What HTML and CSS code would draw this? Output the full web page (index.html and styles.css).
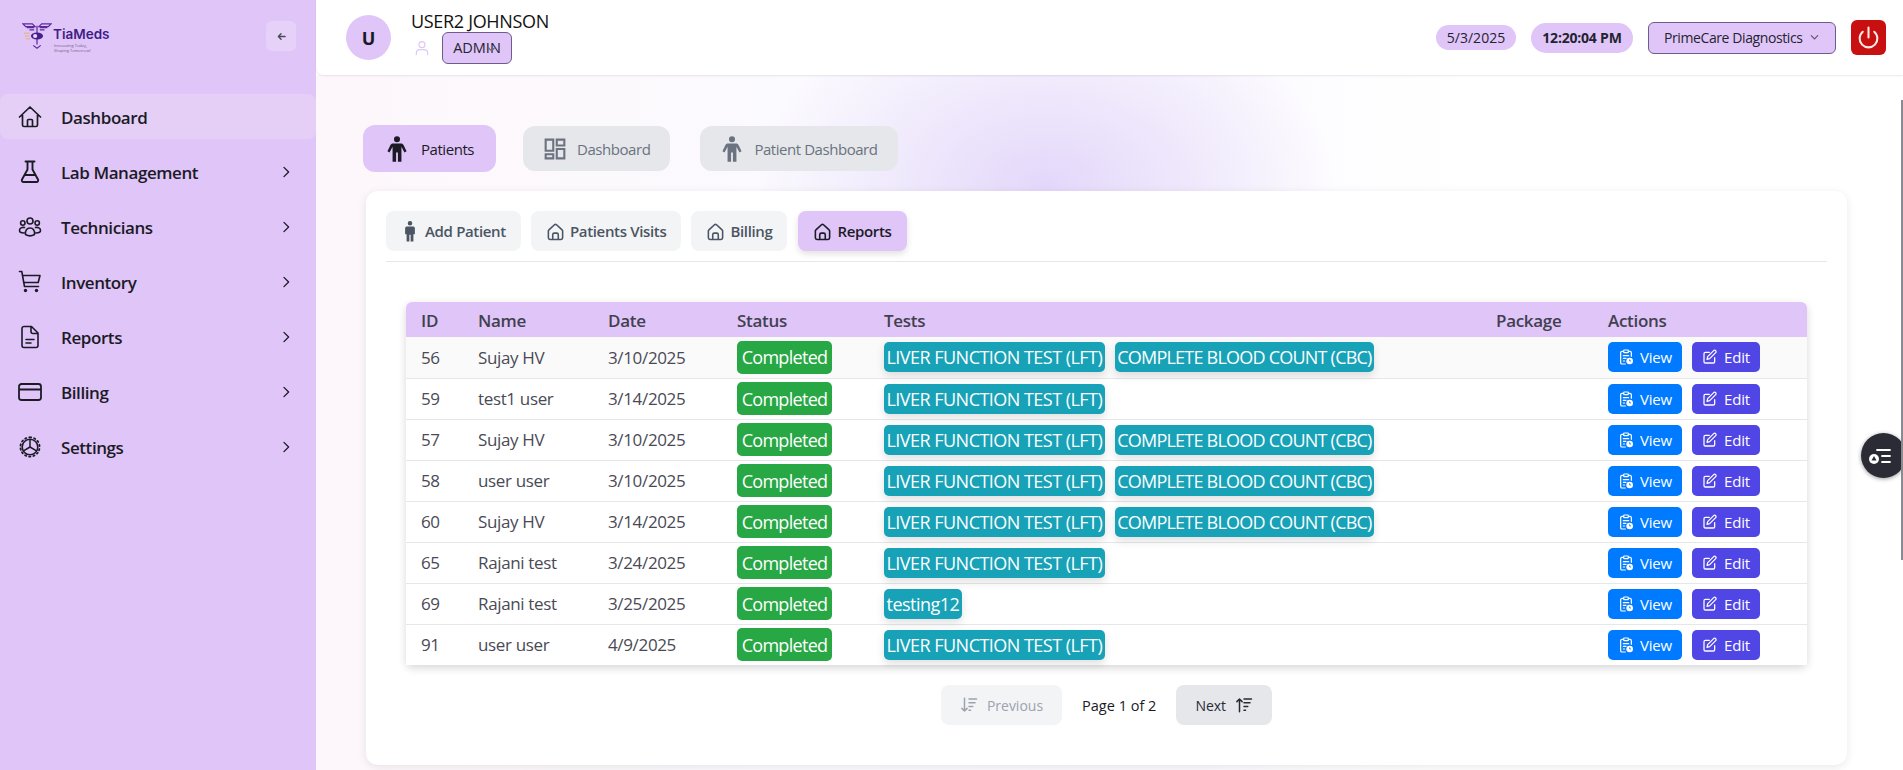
FILE: index.html
```html
<!DOCTYPE html>
<html lang="en">
<head>
<meta charset="utf-8">
<title>TiaMeds</title>
<link rel="stylesheet" href="styles.css">
</head>
<body>
<svg class="sprite" aria-hidden="true">
  <symbol id="i-home" viewBox="0 0 24 24"><path fill="none" stroke="currentColor" stroke-width="1.700" stroke-linecap="round" stroke-linejoin="round" d="M1.500 12 12 2l10.500 10M4.500 10V20a1.500 1.500 0 0 0 1.500 1.500h12a1.500 1.500 0 0 0 1.500-1.500V10M9.500 21.500v-6a1 1 0 0 1 1-1h3a1 1 0 0 1 1 1v6"/></symbol>
  <symbol id="i-house" viewBox="0 0 24 24"><path fill="none" stroke="currentColor" stroke-width="2" stroke-linecap="round" stroke-linejoin="round" d="M3 11.500a2 2 0 0 1 .7-1.500l7-6.500a2 2 0 0 1 2.600 0l7 6.500a2 2 0 0 1 .7 1.500V20a2 2 0 0 1-2 2H5a2 2 0 0 1-2-2ZM8.500 22v-6a2 2 0 0 1 2-2h3a2 2 0 0 1 2 2v6"/></symbol>
  <symbol id="i-person" viewBox="0 0 24 24"><path fill="currentColor" d="M12 1a2.600 2.600 0 1 1 0 5.200a2.600 2.600 0 0 1 0-5.200ZM8.500 7.200h7c1 0 1.700.6 2.100 1.400L20.200 14l-1.800.9L15.800 10v13h-3v-8h-1.600v8h-3V10l-2.600 4.900L3.800 14l2.600-5.400c.4-.8 1.100-1.400 2.100-1.400Z"/></symbol>
  <symbol id="i-slim" viewBox="0 0 24 24"><path fill="currentColor" d="M12 1a2.500 2.500 0 1 1 0 5a2.500 2.500 0 0 1 0-5ZM8.500 7h7A1.800 1.800 0 0 1 17.300 8.800V15.500h-1.600V23.500h-3V16h-1.400v7.500h-3v-8H6.700V8.800A1.800 1.800 0 0 1 8.500 7Z"/></symbol>
  <symbol id="i-grid" viewBox="0 0 24 24"><path fill="none" stroke="currentColor" stroke-width="1.800" d="M4 4h6.500v9.500H4zM13.500 4H20v5h-6.500zM13.500 12H20v8h-6.500zM4 16.500h6.500V20H4z"/></symbol>
  <symbol id="i-flask" viewBox="0 0 24 24"><path fill="none" stroke="currentColor" stroke-width="1.900" stroke-linecap="round" stroke-linejoin="round" d="M7.500 1.500h9M9.500 1.500v8L4 19.500A1.700 1.700 0 0 0 5.500 22h13a1.700 1.700 0 0 0 1.500-2.500L14.500 9.500v-8M7 15h10"/></symbol>
  <symbol id="i-users" viewBox="0 0 24 24"><g fill="none" stroke="currentColor" stroke-width="1.600" stroke-linecap="round" stroke-linejoin="round"><circle cx="12" cy="6" r="3"/><circle cx="4.800" cy="8" r="2.200"/><circle cx="19.200" cy="8" r="2.200"/><path d="M7.500 19.500c-.6-4 1.500-6.500 4.500-6.500s5.100 2.500 4.500 6.500c-2.500 1.500-6.500 1.500-9 0ZM6.500 12.500c-2.500-.5-5 .5-5 3 0 1.500 2 2.500 4.500 2.500M17.500 12.500c2.500-.5 5 .5 5 3 0 1.500-2 2.500-4.500 2.500"/></g></symbol>
  <symbol id="i-cart" viewBox="0 0 24 24"><g fill="none" stroke="currentColor" stroke-width="1.600" stroke-linecap="round" stroke-linejoin="round"><path d="M1.500 1.500h2.300l2.700 15h14M5 5.500h17l-1.800 7H6.200"/></g><circle cx="7.500" cy="20.500" r="1.700" fill="currentColor"/><circle cx="18.500" cy="20.500" r="1.700" fill="currentColor"/></symbol>
  <symbol id="i-doc" viewBox="0 0 24 24"><path fill="none" stroke="currentColor" stroke-width="1.600" stroke-linecap="round" stroke-linejoin="round" d="M6 1.500h7.500L20 8v12.500a2 2 0 0 1-2 2H6a2 2 0 0 1-2-2v-17a2 2 0 0 1 2-2ZM13 1.500V6.500a2 2 0 0 0 2 2h5M8 14.500h8M8 18h5"/></symbol>
  <symbol id="i-card" viewBox="0 0 24 24"><path fill="none" stroke="currentColor" stroke-width="1.800" stroke-linecap="round" stroke-linejoin="round" d="M3.500 4h17A2.500 2.500 0 0 1 23 6.500v11a2.500 2.500 0 0 1-2.500 2.500h-17A2.500 2.500 0 0 1 1 17.500v-11A2.500 2.500 0 0 1 3.500 4ZM1 9.500h22"/></symbol>
  <symbol id="i-gear" viewBox="0 0 24 24"><g fill="none" stroke="currentColor" stroke-linecap="round" stroke-linejoin="round"><circle cx="12" cy="12" r="7.800" stroke-width="1.600"/><path stroke-width="1.500" d="M12 12V4.500M12 12l6.500 3.800M12 12l-6.500 3.800"/><path stroke-width="1.800" stroke-dasharray="1.300 2.900" d="M12 2.400a9.600 9.600 0 1 1-.01 0"/></g></symbol>
  <symbol id="i-chev" viewBox="0 0 24 24"><path fill="none" stroke="currentColor" stroke-width="2.200" stroke-linecap="round" stroke-linejoin="round" d="m8.500 4 8 8-8 8"/></symbol>
  <symbol id="i-clip" viewBox="0 0 24 24"><g fill="none" stroke="currentColor" stroke-width="1.800" stroke-linecap="round" stroke-linejoin="round"><path d="M8.500 3.500H6A2 2 0 0 0 4 5.500v15a2 2 0 0 0 2 2h5M15.500 3.500H18a2 2 0 0 1 2 2V11"/><rect x="8.500" y="1.500" width="7" height="4" rx="1"/><path d="M8 10h8M8 14h4M8 18h2"/></g><circle cx="17.500" cy="18" r="5" fill="currentColor"/><path fill="none" stroke="#007bff" stroke-width="1.300" d="M17.500 15.500V18h2"/></symbol>
  <symbol id="i-edit" viewBox="0 0 24 24"><path fill="none" stroke="currentColor" stroke-width="1.900" stroke-linecap="round" stroke-linejoin="round" d="M11 5H5a2 2 0 0 0-2 2v12a2 2 0 0 0 2 2h12a2 2 0 0 0 2-2v-6M17.500 2.500a2.100 2.100 0 0 1 3 3L11.500 14.500l-4 1 1-4 9-9Z"/></symbol>
  <symbol id="i-sortd" viewBox="0 0 24 24"><path fill="none" stroke="currentColor" stroke-width="2" stroke-linecap="round" stroke-linejoin="round" d="M6 3v17M2.500 16.500 6 20l3.500-3.500M12 4h10M12 9h8M12 14h5M12 19h2"/></symbol>
  <symbol id="i-sortu" viewBox="0 0 24 24"><path fill="none" stroke="currentColor" stroke-width="2" stroke-linecap="round" stroke-linejoin="round" d="M6 21V4M2.500 7.500 6 4l3.500 3.500M12 4h10M12 9h8M12 14h5M12 19h2"/></symbol>
</svg>

<div class="app">
  <aside class="sidebar">
    <div class="brand">
      <div class="logo">
        <svg class="logo-mark" viewBox="0 0 32 28"><g fill="none" stroke="#5b2a9d" stroke-width="1.300"><path d="M1 1h10l3 3H4zM31 1H21l-3 3h10zM5 5h8M27 5h-8M8 7.500h5M24 7.500h-5"/><path d="M16 3v20M12 24l4 3 4-3"/></g><ellipse cx="16" cy="14" rx="6.500" ry="3.800" fill="#4a1d8f"/><circle cx="14" cy="14" r="2.200" fill="#e9dcfb"/><path stroke="#e8a94a" stroke-width=".8" d="M2 11h6M3 14h5M4 17h5"/></svg>
        <div class="logo-text">
          <span class="logo-name">TiaMeds</span>
          <span class="logo-tag">Innovating Today,<br>Shaping Tomorrow!</span>
        </div>
      </div>
      <button class="collapse"><svg viewBox="0 0 10 10"><path fill="none" stroke="currentColor" stroke-width="1.500" stroke-linecap="round" stroke-linejoin="round" d="M9 5H1.500M4.500 2 1.500 5l3 3"/></svg></button>
    </div>
    <nav class="nav">
      <a class="nav-item active"><svg class="nav-ic"><use href="#i-home"/></svg><span class="nav-label">Dashboard</span></a>
      <a class="nav-item"><svg class="nav-ic"><use href="#i-flask"/></svg><span class="nav-label">Lab Management</span><svg class="chev"><use href="#i-chev"/></svg></a>
      <a class="nav-item"><svg class="nav-ic"><use href="#i-users"/></svg><span class="nav-label">Technicians</span><svg class="chev"><use href="#i-chev"/></svg></a>
      <a class="nav-item"><svg class="nav-ic"><use href="#i-cart"/></svg><span class="nav-label">Inventory</span><svg class="chev"><use href="#i-chev"/></svg></a>
      <a class="nav-item"><svg class="nav-ic"><use href="#i-doc"/></svg><span class="nav-label">Reports</span><svg class="chev"><use href="#i-chev"/></svg></a>
      <a class="nav-item"><svg class="nav-ic"><use href="#i-card"/></svg><span class="nav-label">Billing</span><svg class="chev"><use href="#i-chev"/></svg></a>
      <a class="nav-item"><svg class="nav-ic"><use href="#i-gear"/></svg><span class="nav-label">Settings</span><svg class="chev"><use href="#i-chev"/></svg></a>
    </nav>
  </aside>

  <div class="content">
    <header class="topbar">
      <div class="user">
        <div class="avatar">U</div>
        <div class="user-info">
          <div class="user-name">USER2 JOHNSON</div>
          <div class="user-role">
            <svg class="role-ic" viewBox="0 0 24 24"><g fill="none" stroke="currentColor" stroke-width="1.700" stroke-linecap="round"><circle cx="12" cy="7" r="4.500"/><path d="M3.500 22v-2.500c0-3 2.500-5 5.500-5h6c3 0 5.500 2 5.500 5V22"/></g></svg>
            <div class="role-pill">ADMIN<svg class="role-chev" viewBox="0 0 24 24"><path fill="none" stroke="currentColor" stroke-width="2.500" stroke-linecap="round" d="m5 8 7 7 7-7"/></svg></div>
          </div>
        </div>
      </div>
      <div class="top-right">
        <div class="date-pill">5/3/2025</div>
        <div class="time-pill">12:20:04 PM</div>
        <div class="lab-select">PrimeCare Diagnostics<svg class="sel-chev" viewBox="0 0 24 24"><path fill="none" stroke="currentColor" stroke-width="2.500" stroke-linecap="round" d="m5 8 7 7 7-7"/></svg></div>
        <button class="power"><svg viewBox="0 0 24 24"><path fill="none" stroke="currentColor" stroke-width="2" stroke-linecap="round" d="M12 2.500v9.500M6.500 6.500a8.500 8.500 0 1 0 11 0"/></svg></button>
      </div>
    </header>

    <main class="main">
      <div class="tabs">
        <button class="tab tab-on"><svg class="tab-ic"><use href="#i-person"/></svg>Patients</button>
        <button class="tab"><svg class="tab-ic"><use href="#i-grid"/></svg>Dashboard</button>
        <button class="tab"><svg class="tab-ic"><use href="#i-person"/></svg>Patient Dashboard</button>
      </div>
      <section class="card">
        <div class="subtabs">
          <button class="subtab"><svg class="sub-ic sub-tall"><use href="#i-slim"/></svg>Add Patient</button>
          <button class="subtab"><svg class="sub-ic"><use href="#i-house"/></svg>Patients Visits</button>
          <button class="subtab"><svg class="sub-ic"><use href="#i-house"/></svg>Billing</button>
          <button class="subtab subtab-on"><svg class="sub-ic"><use href="#i-house"/></svg>Reports</button>
        </div>
        <div class="table-wrap">
          <table class="grid">
            <colgroup><col class="c-id"><col class="c-name"><col class="c-date"><col class="c-status"><col class="c-tests"><col class="c-pack"><col></colgroup>
            <thead><tr><th>ID</th><th>Name</th><th>Date</th><th>Status</th><th>Tests</th><th>Package</th><th>Actions</th></tr></thead>
            <tbody>
              <tr class="tint"><td>56</td><td>Sujay HV</td><td>3/10/2025</td><td><span class="status">Completed</span></td><td><div class="tests"><span class="test">LIVER FUNCTION TEST (LFT)</span><span class="test test-cbc">COMPLETE BLOOD COUNT (CBC)</span></div></td><td></td><td><div class="acts"><button class="act view"><svg class="act-ic"><use href="#i-clip"/></svg>View</button><button class="act edit"><svg class="act-ic"><use href="#i-edit"/></svg>Edit</button></div></td></tr>
              <tr><td>59</td><td>test1 user</td><td>3/14/2025</td><td><span class="status">Completed</span></td><td><div class="tests"><span class="test">LIVER FUNCTION TEST (LFT)</span></div></td><td></td><td><div class="acts"><button class="act view"><svg class="act-ic"><use href="#i-clip"/></svg>View</button><button class="act edit"><svg class="act-ic"><use href="#i-edit"/></svg>Edit</button></div></td></tr>
              <tr><td>57</td><td>Sujay HV</td><td>3/10/2025</td><td><span class="status">Completed</span></td><td><div class="tests"><span class="test">LIVER FUNCTION TEST (LFT)</span><span class="test test-cbc">COMPLETE BLOOD COUNT (CBC)</span></div></td><td></td><td><div class="acts"><button class="act view"><svg class="act-ic"><use href="#i-clip"/></svg>View</button><button class="act edit"><svg class="act-ic"><use href="#i-edit"/></svg>Edit</button></div></td></tr>
              <tr><td>58</td><td>user user</td><td>3/10/2025</td><td><span class="status">Completed</span></td><td><div class="tests"><span class="test">LIVER FUNCTION TEST (LFT)</span><span class="test test-cbc">COMPLETE BLOOD COUNT (CBC)</span></div></td><td></td><td><div class="acts"><button class="act view"><svg class="act-ic"><use href="#i-clip"/></svg>View</button><button class="act edit"><svg class="act-ic"><use href="#i-edit"/></svg>Edit</button></div></td></tr>
              <tr><td>60</td><td>Sujay HV</td><td>3/14/2025</td><td><span class="status">Completed</span></td><td><div class="tests"><span class="test">LIVER FUNCTION TEST (LFT)</span><span class="test test-cbc">COMPLETE BLOOD COUNT (CBC)</span></div></td><td></td><td><div class="acts"><button class="act view"><svg class="act-ic"><use href="#i-clip"/></svg>View</button><button class="act edit"><svg class="act-ic"><use href="#i-edit"/></svg>Edit</button></div></td></tr>
              <tr><td>65</td><td>Rajani test</td><td>3/24/2025</td><td><span class="status">Completed</span></td><td><div class="tests"><span class="test">LIVER FUNCTION TEST (LFT)</span></div></td><td></td><td><div class="acts"><button class="act view"><svg class="act-ic"><use href="#i-clip"/></svg>View</button><button class="act edit"><svg class="act-ic"><use href="#i-edit"/></svg>Edit</button></div></td></tr>
              <tr><td>69</td><td>Rajani test</td><td>3/25/2025</td><td><span class="status">Completed</span></td><td><div class="tests"><span class="test">testing12</span></div></td><td></td><td><div class="acts"><button class="act view"><svg class="act-ic"><use href="#i-clip"/></svg>View</button><button class="act edit"><svg class="act-ic"><use href="#i-edit"/></svg>Edit</button></div></td></tr>
              <tr><td>91</td><td>user user</td><td>4/9/2025</td><td><span class="status">Completed</span></td><td><div class="tests"><span class="test">LIVER FUNCTION TEST (LFT)</span></div></td><td></td><td><div class="acts"><button class="act view"><svg class="act-ic"><use href="#i-clip"/></svg>View</button><button class="act edit"><svg class="act-ic"><use href="#i-edit"/></svg>Edit</button></div></td></tr>
            </tbody>
          </table>
        </div>
        <div class="pager">
          <button class="pg pg-off"><svg class="pg-ic"><use href="#i-sortd"/></svg>Previous</button>
          <span class="pg-text">Page 1 of 2</span>
          <button class="pg pg-next">Next<svg class="pg-ic"><use href="#i-sortu"/></svg></button>
        </div>
      </section>
    </main>
  </div>
</div>
<button class="float"><svg viewBox="0 0 24 24"><path fill="none" stroke="#fff" stroke-width="1.800" stroke-linecap="round" d="M9 6h13M14 12h8M14 18h8"/><circle cx="6" cy="15" r="5" fill="#fff"/><path fill="#2b2b36" d="m6 12 2.500 4.500h-5z"/></svg></button>
<div class="scroll-thumb"></div>
</body>
</html>
```
FILE: styles.css
```css
* { box-sizing: border-box; }
html, body { margin: 0; height: 100%; overflow: hidden; }
body { font-family: "Open Sans", "Noto Sans", sans-serif; color: #1f2430; background: #fff; }
button { font-family: inherit; border: 0; cursor: pointer; }
.sprite { display: none; }

.app { display: flex; height: 770px; }

.sidebar { width: 316px; flex: none; background: #e0c5f8; }
.brand { height: 94px; display: flex; align-items: flex-start; justify-content: space-between; padding: 21px 20px 0 22px; }
.logo { display: flex; gap: 1px; align-items: flex-start; }
.logo-mark { width: 30px; height: 30px; }
.logo-text { display: flex; flex-direction: column; }
.logo-name { font-size: 13.5px; line-height: 18px; font-weight: 600; color: #3f1d87; font-family: "Inter", sans-serif; margin-top: 4px; }
.logo-tag { font-size: 4px; line-height: 5px; color: #6f5f85; margin-left: 1px; }
.collapse { width: 30px; height: 30px; border-radius: 6px; background: #e6d2f9; color: #4a4a55; padding: 0; display: flex; align-items: center; justify-content: center; }
.collapse svg { width: 9px; height: 9px; }

.nav { display: flex; flex-direction: column; gap: 10px; }
.nav-item { height: 45px; display: flex; align-items: center; padding: 1px 23px 0 18px; font-size: 17px; font-weight: 600; color: #1b1b26; }
.nav-item.active { background: #e6cff7; border-radius: 8px; }
.nav-ic { width: 24px; height: 24px; flex: none; margin-right: 19px; }
.nav-label { flex: 1; letter-spacing: -.42px; }
.chev { width: 14px; height: 14px; flex: none; }

.content { flex: 1; min-width: 0; display: flex; flex-direction: column; }
.topbar { height: 75px; flex: none; background: #fff; display: flex; align-items: center; justify-content: space-between; padding: 0 17px 0 30px; box-shadow: 0 1px 2px rgba(0,0,0,.09); border-radius: 0 0 0 8px; position: relative; z-index: 1; }
.user { display: flex; align-items: center; gap: 20px; }
.avatar { width: 45px; height: 45px; border-radius: 50%; background: #e0c5f8; display: flex; align-items: center; justify-content: center; font-weight: 700; font-size: 18px; color: #1a1a24; }
.user-info { display: flex; flex-direction: column; margin-top: -1px; }
.user-name { font-size: 18px; font-weight: 500; line-height: 21px; color: #111; letter-spacing: -.32px; }
.user-role { display: flex; align-items: center; gap: 12px; margin-top: 0; margin-left: 3px; }
.role-ic { width: 16px; height: 18px; color: #e0c5f8; }
.role-pill { position: relative; width: 70px; height: 32px; border: 1px solid #6f5c8c; border-radius: 6px; background: #e0c5f8; display: flex; align-items: center; justify-content: center; font-size: 14.500px; }
.role-chev { position: absolute; top: 11px; right: 14px; width: 11px; height: 11px; color: #6a6a76; }
.top-right { display: flex; align-items: center; gap: 15px; }
.date-pill { height: 25px; width: 80px; border-radius: 13px; background: #e0c5f8; display: flex; align-items: center; justify-content: center; font-size: 14px; }
.time-pill { height: 30px; width: 102px; border-radius: 15px; background: #e0c5f8; display: flex; align-items: center; justify-content: center; font-size: 14px; font-weight: 700; letter-spacing: -.2px; }
.lab-select { position: relative; height: 32px; width: 188px; border: 1px solid #6f5c8c; border-radius: 6px; background: #e0c5f8; font-size: 14px; line-height: 30px; padding-left: 15px; white-space: nowrap; letter-spacing: -.4px; }
.sel-chev { position: absolute; top: 9px; right: 15px; width: 11px; height: 11px; color: #5a5a66; }
.power { width: 35px; height: 35px; border-radius: 6px; background: #c81010; color: #fbe9e4; padding: 5px; display: flex; }
.power svg { width: 25px; height: 25px; }

.main { flex: 1; min-height: 0; padding: 50px 56px 0 47px; background:
  radial-gradient(290px 190px at 730px 110px, rgba(226,214,250,.95), rgba(226,214,250,0) 100%),
  linear-gradient(90deg, #fdf6fb 0, #fdf8fc 6%, #fbfafe 30%, #fbf9fe 55%, #ffffff 72%); }
.tabs { display: flex; align-items: center; gap: 30px; margin-bottom: 19px; }
.tab { height: 45px; display: flex; align-items: center; gap: 8px; padding: 0 20px 0 18px; border-radius: 12px; background: #e5e7eb; color: #6b7280; font-size: 15px; letter-spacing: -.45px; }
.tab-on { height: 47px; width: 133px; background: #e0c5f8; color: #1b1b26; margin-right: -3px; padding-left: 20px; gap: 10px; }
.tab-ic { width: 28px; height: 28px; flex: none; }
.card { margin-left: 3px; height: 574px; background: #fff; border-radius: 12px; box-shadow: 0 2px 10px rgba(0,0,0,.09); padding: 20px 20px 0; }
.subtabs { display: flex; gap: 10px; height: 51px; align-items: flex-start; border-bottom: 1px solid #e5e7eb; }
.subtab { height: 40px; display: flex; align-items: center; gap: 5px; padding: 0 15px; border-radius: 8px; background: #f3f4f6; color: #4b5563; font-size: 15px; font-weight: 600; letter-spacing: -.34px; }
.subtab-on { background: #e0c5f8; color: #1b1b26; box-shadow: 0 3px 6px rgba(0,0,0,.12); margin-left: 1px; }
.sub-ic { width: 19px; height: 19px; }
.sub-tall { width: 22px; height: 22px; margin: 0 -1px 0 -2px; }

.table-wrap { margin: 40px 20px 0; border-radius: 6px; box-shadow: 0 3px 8px rgba(0,0,0,.16); }
.grid { width: 100%; border-collapse: collapse; table-layout: fixed; font-size: 17px; letter-spacing: -.35px; color: #4a4a55; }
.c-id { width: 56px; } .c-name { width: 130px; } .c-date { width: 129px; } .c-status { width: 147px; } .c-tests { width: 612px; } .c-pack { width: 112px; }
.grid th { height: 35px; background: #e0c5f8; text-align: left; padding: 1px 16px 0; font-weight: 600; color: #41404f; letter-spacing: -.3px; }
.grid th:first-child { border-top-left-radius: 6px; }
.grid th:last-child { border-top-right-radius: 6px; }
.grid td { height: 41px; padding: 0 16px; border-bottom: 1px solid #e5e7eb; white-space: nowrap; background: #fff; }
.grid th:first-child, .grid td:first-child { padding-left: 15px; }
.grid tr.tint td { background: #fafafa; }
.grid tr:last-child td { border-bottom: 0; }
.status { display: inline-flex; align-items: center; justify-content: center; width: 95px; height: 33px; border-radius: 5px; background: #28a745; color: #fff; font-size: 18px; vertical-align: middle; letter-spacing: -.7px; }
.tests { display: flex; gap: 10px; }
.test { height: 30px; padding: 0 2.500px; display: inline-flex; align-items: center; border-radius: 5px; background: #17a2b8; color: #fff; font-size: 18px; letter-spacing: -.53px; box-shadow: 0 4px 8px rgba(0,0,0,.12); }
.test-cbc { letter-spacing: -.78px; }
.acts { display: flex; gap: 10px; }
.act { height: 30px; display: flex; align-items: center; justify-content: center; gap: 6px; border-radius: 5px; color: #fff; font-size: 15px; font-weight: 500; letter-spacing: -.2px; padding: 0; }
.view { width: 74px; background: #007bff; }
.edit { width: 68px; background: #4f46e5; }
.act-ic { width: 16px; height: 16px; }

.pager { display: flex; align-items: center; justify-content: center; gap: 20px; margin-top: 20px; }
.pg { height: 40px; display: flex; align-items: center; gap: 9px; border-radius: 8px; font-size: 14px; padding: 0 19px; }
.pg-off { background: #f3f4f6; color: #9ca3af; }
.pg-next { background: #e5e7eb; color: #2a2a35; }
.pg-ic { width: 18px; height: 18px; }
.pg-text { font-size: 14.500px; color: #1b1b26; }

.float { position: fixed; left: 1861px; top: 433px; width: 45px; height: 45px; border-radius: 50%; background: #2b2b36; padding: 7px 14px 7px 7px; box-shadow: 0 1px 4px rgba(0,0,0,.4); }
.float svg { width: 24px; height: 24px; display: block; }
.scroll-thumb { position: fixed; right: 0; top: 100px; width: 2px; height: 460px; background: #8a8a92; }
```
